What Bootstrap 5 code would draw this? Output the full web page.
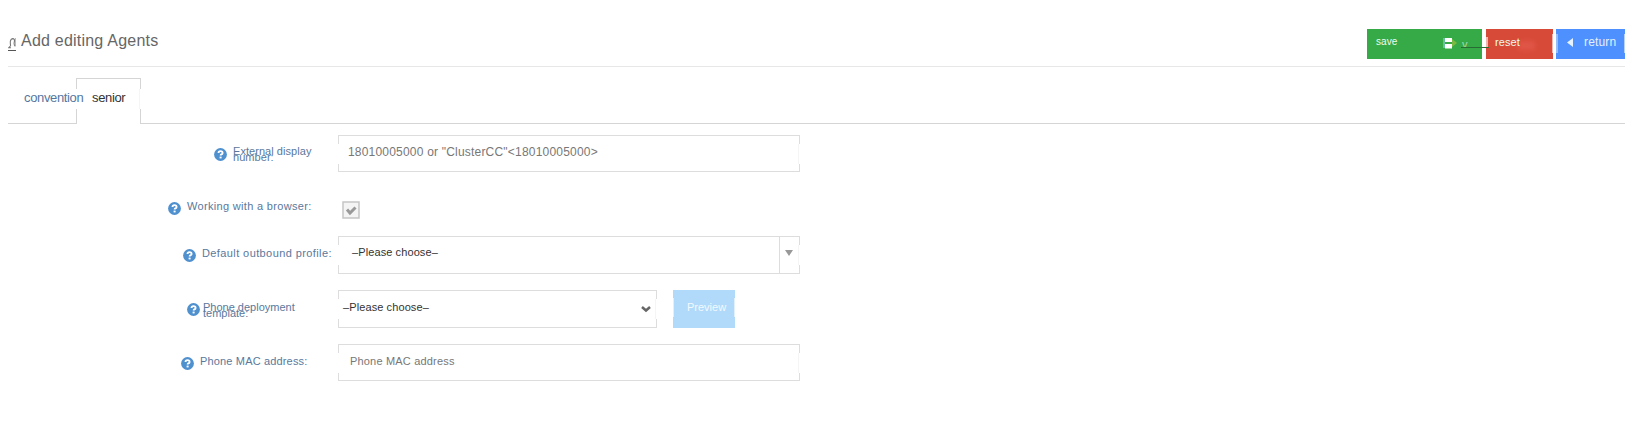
<!DOCTYPE html>
<html lang="en">
<head>
<meta charset="utf-8">
<title>Add editing Agents</title>
<link href="https://cdn.jsdelivr.net/npm/bootstrap@5.3.0/dist/css/bootstrap.min.css" rel="stylesheet">
<style>
body{font-family:"Liberation Sans",Arial,sans-serif;background:#fff;height:433px;overflow:hidden;font-size:11px;line-height:14px}
svg{display:block;flex:none}
.topline{height:39px;margin-top:28px;border-bottom:1px solid #e7e7e7}
.heading{font-size:16px;line-height:18px;letter-spacing:.22px;color:#666;margin:4px 0 0 5px}
.agent{margin-top:7px}
.actions{gap:3px;margin-top:1px}
.act{height:30px;border:0;border-radius:0;color:#fff;padding:0;font:11px/14px "Liberation Sans",Arial,sans-serif;display:flex;align-items:flex-start;position:relative}
.act>span{color:#eefaf0}
.save{width:115px;background:#35aa47;padding:6px 0 0 9px;margin-right:1px}
.save>span{font-size:10px;letter-spacing:.1px}
.reset{width:67px;background:#d84a38;padding:6px 0 0 9px}
.return{width:69px;background:#4d90fe;padding:6px 0 0 11px}
.return>span{font-size:12px;letter-spacing:.15px;color:#e6efff}
.smudge{position:absolute;top:8px;height:19px;width:3px;background:#fff;opacity:.6}
.tabs{height:57px;padding-top:11px;border-bottom:1px solid #d5d5d5;font-size:13px;line-height:18px}
.tabs .nav-link{padding:11px 0 0;height:46px;letter-spacing:-.35px;color:#55779f;border:0;border-radius:0}
.tabs .first{width:68px;padding-left:16px;position:relative;z-index:2;white-space:nowrap}
.tabs .nav-link.active{width:65px;height:46px;color:#333;border:1px solid #d5d5d5;border-bottom:0;padding:10px 0 0 15px;background:#fff;position:relative}
.gap-side:before,.gap-side:after{content:"";position:absolute;top:8px;height:20px;width:1px;background:#fff}
.gap-side:before{left:-1px}
.gap-side:after{right:-1px;box-shadow:-1px 0 0 #f5f5f5}
.nav-link.gap-side:before,.nav-link.gap-side:after{top:10px}
.line{height:38px}
.lab{width:330px;color:#5a789c;white-space:nowrap}
.lab svg{margin-right:6px}
.two{line-height:6px}
.box{width:462px;height:38px;border:1px solid #ddd;position:relative;color:#777;white-space:nowrap}
.drop{position:absolute;right:0;top:0;width:20px;height:36px;border-left:1px solid #ddd}
.preview{width:62px;height:38px;background:#b1d9f9;color:#f3faff;padding:10px 0 0 14px;position:relative;margin-left:16px}
.dark{color:#333}
.choose{letter-spacing:.1px}
</style>
</head>
<body>
<svg width="0" height="0" class="position-absolute"><defs><symbol id="q" viewBox="0 0 13 13"><circle cx="6.5" cy="6.5" r="6.4" fill="#4f90cf"/><path d="M4.5 5Q4.5 3.2 6.5 3.2Q8.6 3.2 8.6 4.9Q8.6 5.9 7.4 6.4Q6.6 6.8 6.6 7.6" fill="none" stroke="#fff" stroke-width="1.8"/><rect x="5.6" y="8.6" width="2" height="1.8" fill="#fff"/></symbol></defs></svg>
<div style="padding:0 9px 0 8px">
<header class="topline d-flex">
  <svg class="agent" width="8" height="17" viewBox="0 0 8 17"><path d="M2.6 10.5Q1.5 4 4.6 3.6Q7.2 3.6 6.2 7.5Q5.8 10 7.3 11.4M2.8 10.5L.8 12.7H3" fill="none" stroke="#777" stroke-width="1.1"/><path d="M0 15.5H8" stroke="#555"/><path d="M7.5 3V11" stroke="#dca06a" stroke-width=".8"/></svg>
  <h1 class="heading me-auto">Add editing Agents</h1>
  <div class="actions d-flex">
    <button class="act save"><span>save</span>
      <svg class="position-absolute" style="left:75px;top:8px;filter:blur(.6px)" width="20" height="13" viewBox="0 0 20 13"><rect x="3" y="1" width="7" height="4" fill="#fff"/><rect x="3" y="7" width="7" height="4.5" fill="#fff"/><path d="M1 1h2v10H1z" fill="#6dbfa2"/><path d="M10 2l5 4-5 4z" fill="#7cb942"/></svg>
      <span class="position-absolute" style="left:95px;top:8px;font-size:11px;color:#a5d8ad">v</span></button>
    <button class="act reset"><i class="smudge" style="left:-4px;top:8px;height:11px;width:6px"></i><i class="position-absolute" style="left:-25px;top:18px;width:28px;height:1px;background:#286b34"></i><i class="position-absolute" style="left:32px;top:12px;width:17px;height:9px;background:#df5547;filter:blur(2px)"></i><span class="position-relative" style="letter-spacing:.1px">reset</span><i class="smudge" style="right:-2px;top:5px"></i></button>
    <button class="act return"><i class="smudge" style="left:-1px;top:5px;opacity:.4"></i><svg width="6" height="9" style="margin:3px 11px 0 0" viewBox="0 0 6 9"><path d="M6 0V9L0 4.5z" fill="#e6f3ff"/></svg><span>return</span><i class="smudge" style="right:-1px;top:5px;width:2px"></i></button>
  </div>
</header>
<nav class="tabs nav flex-nowrap"><a class="nav-link first">convention</a><a class="nav-link active gap-side">senior</a></nav>
<main>
  <div class="line d-flex" style="height:37px;margin-top:11px">
    <div class="lab d-flex" style="padding-left:206px"><svg width="13" height="13" style="margin-top:13px"><use href="#q"/></svg><div class="two" style="padding-top:13px;letter-spacing:.05px">External display<br>number:</div></div>
    <div class="box gap-side" style="height:37px;padding:9px 0 0 9px;font-size:12px;letter-spacing:.2px">18010005000 or "ClusterCC"&lt;18010005000&gt;</div>
  </div>
  <div class="line d-flex" style="height:28px;margin-top:28px">
    <div class="lab d-flex" style="padding-left:160px"><svg width="13" height="13" style="margin-top:2px"><use href="#q"/></svg><span style="letter-spacing:.32px;margin-top:-1px">Working with a browser:</span></div>
    <svg width="18" height="18" style="margin:1px 0 0 4px" viewBox="0 0 18 18"><rect x="1" y="1" width="16" height="16" fill="#f4f4f4" stroke="#c5c5c5" stroke-width="1.5"/><path d="M5 8.5L8 12L13.5 6.5" fill="none" stroke="#999" stroke-width="3"/></svg>
  </div>
  <div class="line d-flex" style="margin-top:8px">
    <div class="lab d-flex" style="padding-left:175px"><svg width="13" height="13" style="margin-top:13px"><use href="#q"/></svg><span style="padding-top:10px;letter-spacing:.4px">Default outbound profile:</span></div>
    <div class="box gap-side dark" style="padding:8px 0 0 13px"><span class="choose">–Please choose–</span><div class="drop"><svg width="8" height="6" style="margin:13px 0 0 5px"><path d="M0 0H8L4 6z" fill="#999"/></svg></div></div>
  </div>
  <div class="line d-flex" style="margin-top:16px">
    <div class="lab d-flex" style="padding-left:179px"><svg width="13" height="13" style="margin:13px 3px 0 0"><use href="#q"/></svg><div class="two" style="padding-top:14px">Phone deployment<br>template:</div></div>
    <div class="box gap-side dark d-flex" style="width:319px;padding:9px 0 0 4px"><span class="choose">–Please choose–</span><svg width="10" height="7" style="margin:6px 5px 0 auto"><path d="M1 1L5 4.5L9 1" fill="none" stroke="#666" stroke-width="2.5"/></svg></div>
    <div class="preview"><i class="smudge" style="left:-1px;width:2px"></i><span>Preview</span><i class="smudge" style="right:-1px;width:2px"></i></div>
  </div>
  <div class="line d-flex" style="margin-top:16px">
    <div class="lab d-flex" style="padding-left:173px"><svg width="13" height="13" style="margin-top:13px"><use href="#q"/></svg><span style="padding-top:10px;letter-spacing:.16px">Phone MAC address:</span></div>
    <div class="box gap-side" style="height:37px;padding:9px 0 0 11px"><span style="letter-spacing:.18px">Phone MAC address</span></div>
  </div>
</main>
</div>
</body>
</html>
